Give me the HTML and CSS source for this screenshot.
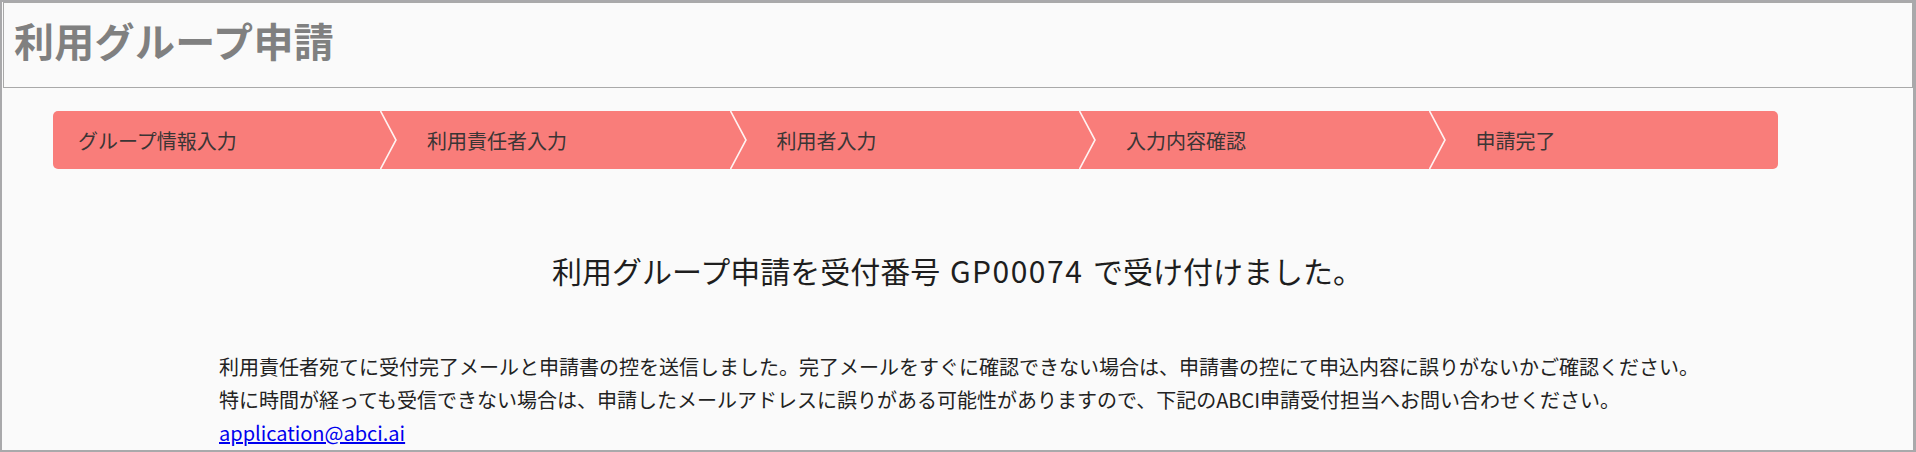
FILE: index.html
```html
<!DOCTYPE html>
<html lang="ja">
<head>
<meta charset="utf-8">
<title>利用グループ申請</title>
<link rel="stylesheet" href="styles.css">
</head>
<body>
<div class="frame">
  <header class="page-header">
    <h1 class="page-title">利用グループ申請</h1>
  </header>
  <ol class="steps">
    <li class="step step-first">グループ情報入力</li>
    <li class="step">
      <svg class="chev" width="20" height="58" viewBox="0 0 20 58"><polyline points="0.5,0 16,29 0.5,58" fill="none" stroke="#fff3f2" stroke-width="1.6"/></svg>
      利用責任者入力</li>
    <li class="step">
      <svg class="chev" width="20" height="58" viewBox="0 0 20 58"><polyline points="0.5,0 16,29 0.5,58" fill="none" stroke="#fff3f2" stroke-width="1.6"/></svg>
      利用者入力</li>
    <li class="step">
      <svg class="chev" width="20" height="58" viewBox="0 0 20 58"><polyline points="0.5,0 16,29 0.5,58" fill="none" stroke="#fff3f2" stroke-width="1.6"/></svg>
      入力内容確認</li>
    <li class="step">
      <svg class="chev" width="20" height="58" viewBox="0 0 20 58"><polyline points="0.5,0 16,29 0.5,58" fill="none" stroke="#fff3f2" stroke-width="1.6"/></svg>
      申請完了</li>
  </ol>
  <h2 class="done-title">利用グループ申請を受付番号 <span class="code">GP00074</span> で受け付けました。</h2>
  <div class="message">
    <p class="line">利用責任者宛てに受付完了メールと申請書の控を送信しました。完了メールをすぐに確認できない場合は、申請書の控にて申込内容に誤りがないかご確認ください。</p>
    <p class="line">特に時間が経っても受信できない場合は、申請したメールアドレスに誤りがある可能性がありますので、下記のABCI申請受付担当へお問い合わせください。</p>
    <p class="line"><a class="mail" href="mailto:application@abci.ai">application@abci.ai</a></p>
  </div>
</div>
</body>
</html>
```
FILE: styles.css
```css
* { box-sizing: border-box; }
html, body { margin: 0; padding: 0; }
body {
  font-family: "Noto Sans CJK JP", "Noto Sans", sans-serif;
  background: #fafafa;
}
.frame {
  height: 452px;
  overflow: hidden;
  background: #fafafa;
  border-style: solid;
  border-color: #a9a9ab;
  border-width: 2px 3px 2px 2px;
}
.page-header {
  margin-left: 1px;
  height: 86px;
  border: 1px solid #a9a9a9;
  padding: 17px 0 0 10px;
}
.page-title {
  margin: 0;
  font-size: 40px;
  line-height: 40px;
  font-weight: 700;
  color: #808080;
  letter-spacing: 0.3px;
}
.steps {
  list-style: none;
  margin: 23px 0 0 51px;
  padding: 0;
  width: 1725px;
  height: 58px;
  display: grid;
  grid-template-columns: 327px repeat(4, 1fr);
  background: #f97d7a;
  border-radius: 5px;
}
.step {
  position: relative;
  display: flex;
  align-items: center;
  padding-left: 47px;
  font-size: 20px;
  color: #3b3535;
  white-space: nowrap;
}
.step-first { padding-left: 25px; }
.chev {
  position: absolute;
  left: 0;
  top: 0;
}
.done-title {
  margin: 86px 0 0;
  text-align: center;
  font-size: 30px;
  line-height: 30px;
  font-weight: 400;
  color: #1e1e1e;
  word-spacing: 3px;
}
.code { letter-spacing: 1.5px; }
.message {
  margin-top: 65px;
  padding-left: 217px;
}
.line {
  margin: 0;
  font-size: 20px;
  line-height: 33px;
  color: #222;
  white-space: nowrap;
}
.mail {
  color: #0000ee;
  text-decoration: underline;
}
```
